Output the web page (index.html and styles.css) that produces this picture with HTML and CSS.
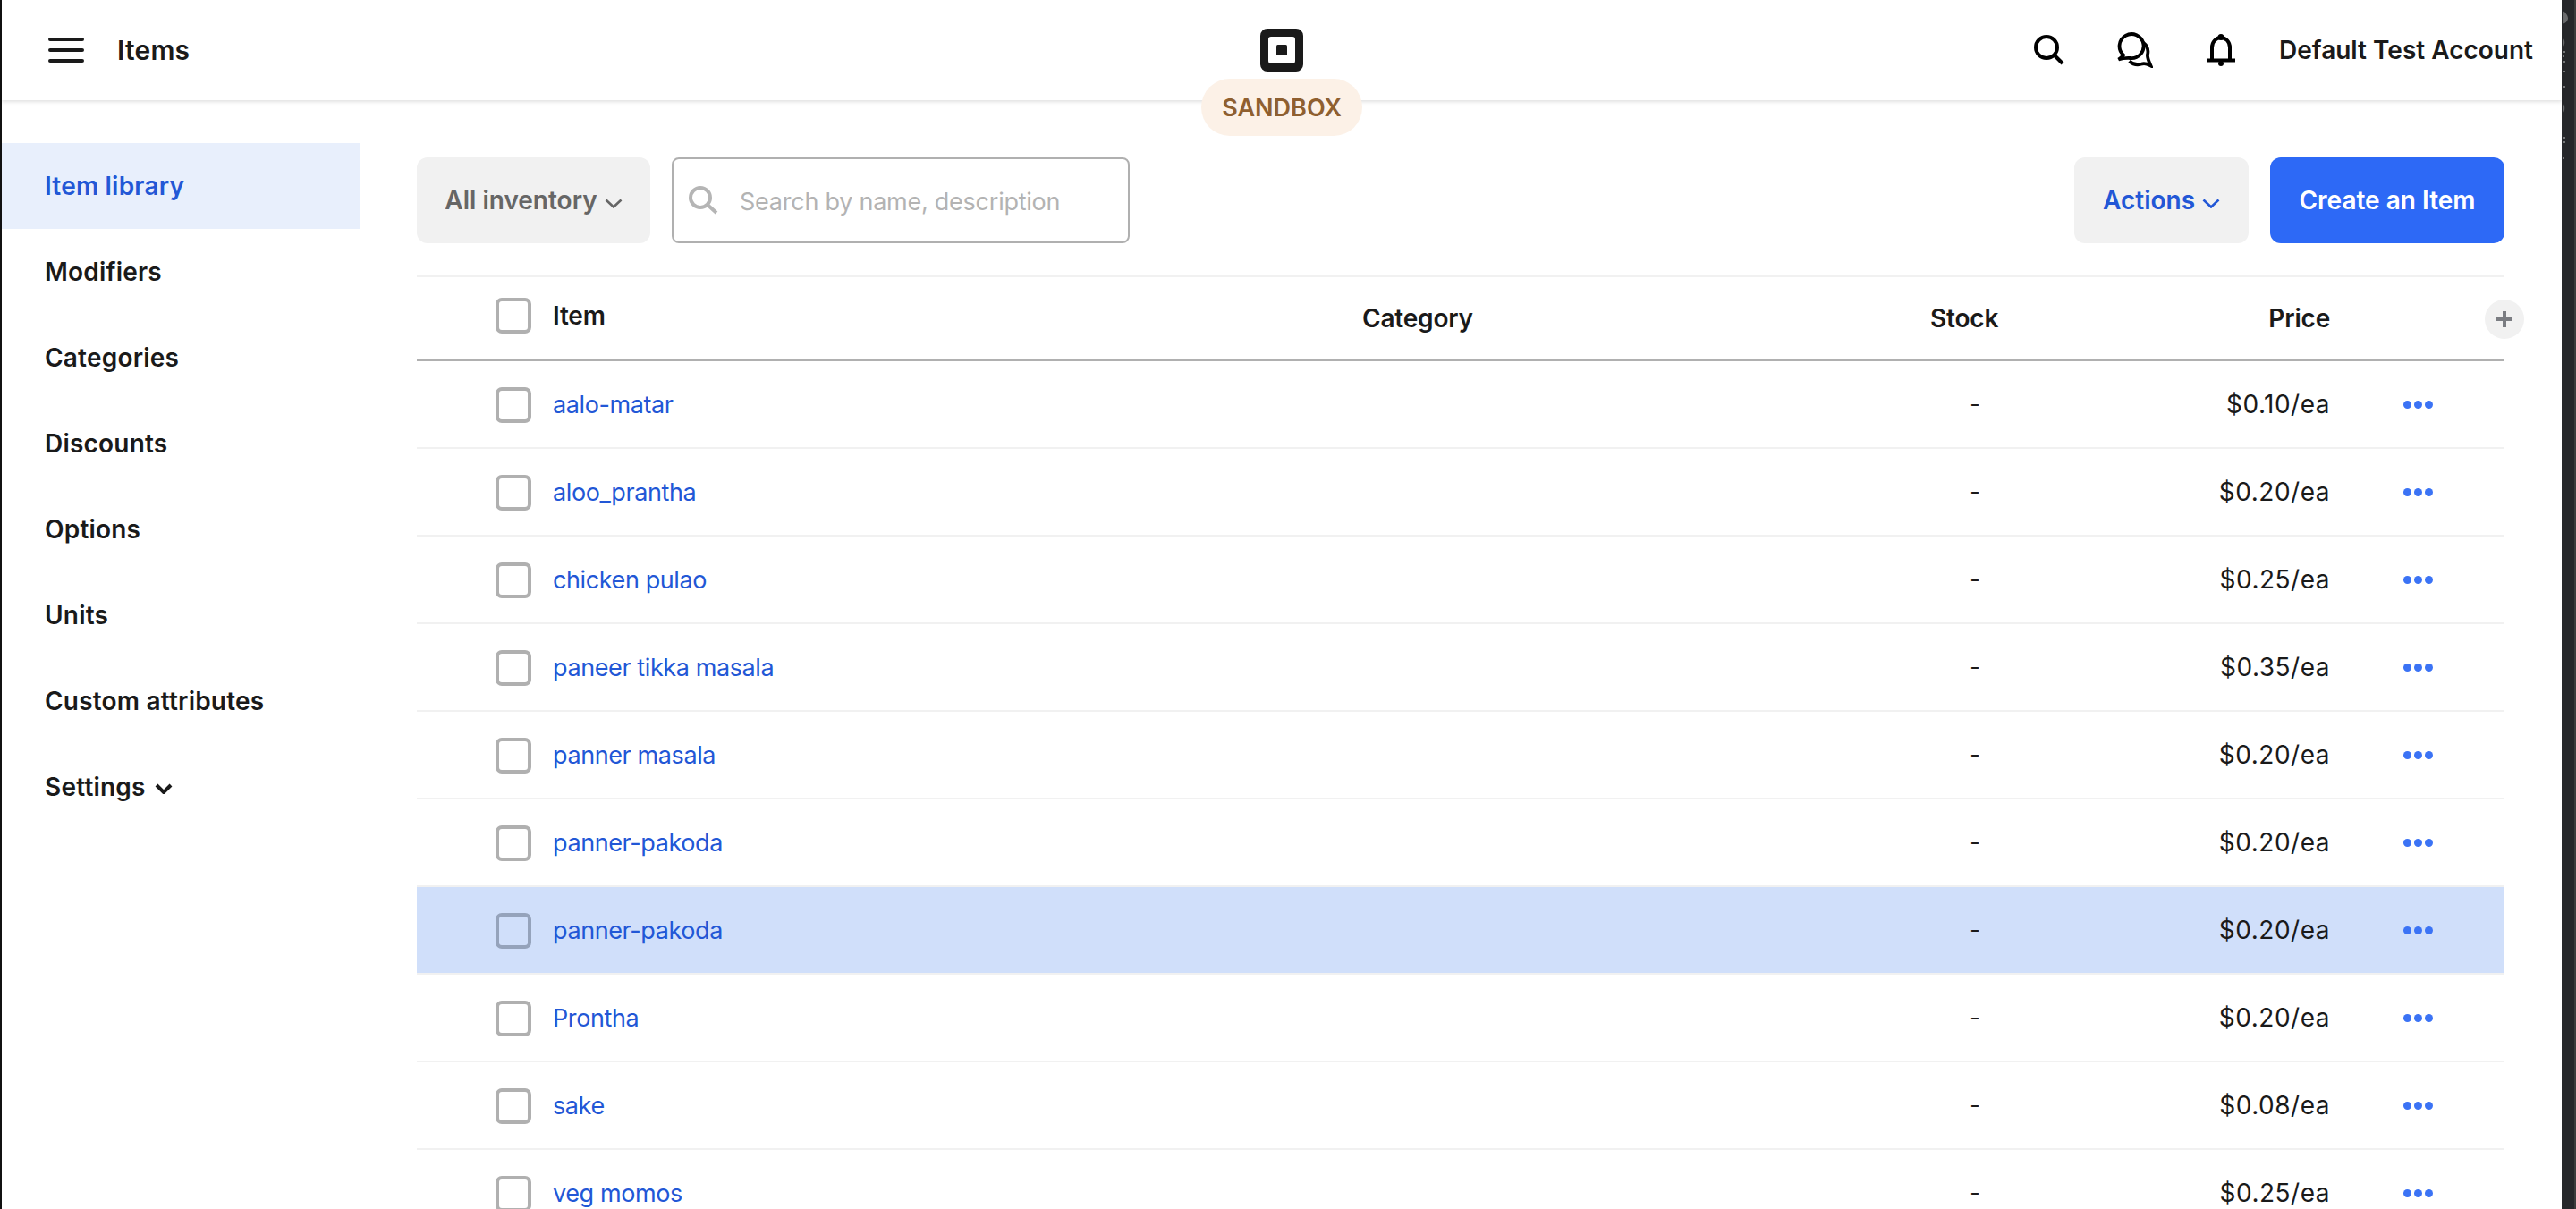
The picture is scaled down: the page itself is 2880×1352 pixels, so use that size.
FILE: index.html
```html
<!DOCTYPE html>
<html lang="en">
<head>
<meta charset="utf-8">
<title>Items</title>
<link rel="stylesheet" href="styles.css">
</head>
<body>
<div class="window">
  <div class="edge-left"></div>
  <div class="app">
    <header class="topbar">
      <div class="top-left">
        <svg class="burger" width="40" height="28" viewBox="0 0 40 28"><rect y="0" width="40" height="4" rx="2"/><rect y="12" width="40" height="4" rx="2"/><rect y="24" width="40" height="4" rx="2"/></svg>
        <span class="page-title">Items</span>
      </div>
      <svg class="logo" width="48" height="48" viewBox="0 0 48 48"><path fill-rule="evenodd" d="M8 0h32a8 8 0 0 1 8 8v32a8 8 0 0 1-8 8H8a8 8 0 0 1-8-8V8a8 8 0 0 1 8-8zM12 9a3 3 0 0 0-3 3v24a3 3 0 0 0 3 3h24a3 3 0 0 0 3-3V12a3 3 0 0 0-3-3z"/><rect x="18" y="18" width="12" height="12" rx="1.5"/></svg>
      <div class="top-right">
        <svg class="icon-search" width="34" height="34" viewBox="0 0 34 34"><circle cx="14" cy="14" r="12"/><path d="M23 23l9 9"/></svg>
        <svg class="icon-chat" width="40" height="40" viewBox="0 0 40 40"><path d="M7 25.600A13.500 13.500 0 1 1 14.500 29C10.500 28.800 6 29.200 1.500 30.500C4 28.800 5.800 27.400 7 25.600z"/><path d="M29 11.500C33.500 15 35.200 20 34 25C33.500 28 34.500 31 37.500 37.500C34 35.800 31.500 34.500 28.500 35.300C23.500 37 17.500 36 13.500 32.500"/></svg>
        <svg class="icon-bell" width="32" height="36" viewBox="0 0 32 36"><path class="bell-body" d="M6 28V15a10 11 0 0 1 20 0v13"/><rect x="0" y="27.500" width="32" height="4"/><circle cx="16" cy="3.500" r="3.500"/><circle cx="16" cy="33" r="3"/></svg>
        <span class="account">Default Test Account</span>
      </div>
      <div class="sandbox">SANDBOX</div>
    </header>
    <div class="body">
      <nav class="sidebar">
        <a class="nav-item active">Item library</a>
        <a class="nav-item">Modifiers</a>
        <a class="nav-item">Categories</a>
        <a class="nav-item">Discounts</a>
        <a class="nav-item">Options</a>
        <a class="nav-item">Units</a>
        <a class="nav-item">Custom attributes</a>
        <a class="nav-item">Settings <svg class="nav-chevron" width="20" height="12" viewBox="0 0 20 12"><path d="M2 2l8 8 8-8"/></svg></a>
      </nav>
      <main class="main">
        <div class="toolbar">
          <button class="btn btn-filter">All inventory <svg class="chevron" width="20" height="11" viewBox="0 0 20 11"><path d="M1.500 1.500L10 9.500l8.500-8"/></svg></button>
          <div class="search">
            <svg class="search-glass" width="34" height="32" viewBox="0 0 34 32"><circle cx="13" cy="13" r="11"/><path d="M21 21l10 9"/></svg>
            <span class="placeholder">Search by name, description</span>
          </div>
          <div class="spacer"></div>
          <button class="btn btn-actions">Actions <svg class="chevron" width="20" height="11" viewBox="0 0 20 11"><path d="M1.500 1.500L10 9.500l8.500-8"/></svg></button>
          <button class="btn btn-primary">Create an Item</button>
        </div>
        <div class="table">
          <div class="row head">
            <span class="check head-check"></span>
            <span class="cell-name head-name">Item</span>
            <span>Category</span>
            <span>Stock</span>
            <span class="cell-price">Price</span>
            <span></span>
            <span class="add-col"><svg width="20" height="20" viewBox="0 0 20 20"><path d="M10 1v18M1 10h18"/></svg></span>
          </div>
          <div class="row"><span class="check"></span><a class="cell-name">aalo-matar</a><span></span><span class="cell-stock">-</span><span class="cell-price">$0.10/ea</span><span class="dots"><i></i><i></i><i></i></span></div>
          <div class="row"><span class="check"></span><a class="cell-name">aloo_prantha</a><span></span><span class="cell-stock">-</span><span class="cell-price">$0.20/ea</span><span class="dots"><i></i><i></i><i></i></span></div>
          <div class="row"><span class="check"></span><a class="cell-name">chicken pulao</a><span></span><span class="cell-stock">-</span><span class="cell-price">$0.25/ea</span><span class="dots"><i></i><i></i><i></i></span></div>
          <div class="row"><span class="check"></span><a class="cell-name">paneer tikka masala</a><span></span><span class="cell-stock">-</span><span class="cell-price">$0.35/ea</span><span class="dots"><i></i><i></i><i></i></span></div>
          <div class="row"><span class="check"></span><a class="cell-name">panner masala</a><span></span><span class="cell-stock">-</span><span class="cell-price">$0.20/ea</span><span class="dots"><i></i><i></i><i></i></span></div>
          <div class="row"><span class="check"></span><a class="cell-name">panner-pakoda</a><span></span><span class="cell-stock">-</span><span class="cell-price">$0.20/ea</span><span class="dots"><i></i><i></i><i></i></span></div>
          <div class="row selected"><span class="check"></span><a class="cell-name">panner-pakoda</a><span></span><span class="cell-stock">-</span><span class="cell-price">$0.20/ea</span><span class="dots"><i></i><i></i><i></i></span></div>
          <div class="row"><span class="check"></span><a class="cell-name">Prontha</a><span></span><span class="cell-stock">-</span><span class="cell-price">$0.20/ea</span><span class="dots"><i></i><i></i><i></i></span></div>
          <div class="row"><span class="check"></span><a class="cell-name">sake</a><span></span><span class="cell-stock">-</span><span class="cell-price">$0.08/ea</span><span class="dots"><i></i><i></i><i></i></span></div>
          <div class="row"><span class="check"></span><a class="cell-name">veg momos</a><span></span><span class="cell-stock">-</span><span class="cell-price">$0.25/ea</span><span class="dots"><i></i><i></i><i></i></span></div>
        </div>
      </main>
    </div>
  </div>
  <aside class="edge-right">
    <svg width="14" height="190" viewBox="0 0 14 190"><path class="mark-soft" d="M1 12C5 14 7 18 7 21C6 25 3 26 1 27z"/><path class="mark-soft" d="M1 42C4 45 4 50 1 53z"/><path class="mark-soft" d="M1 115C4 118 4 124 1 127z"/><rect x="1" y="57" width="3" height="2"/><rect x="1" y="62" width="2" height="2"/><rect x="1" y="68" width="3" height="2"/><rect x="1" y="79" width="3" height="2"/><rect x="1" y="96" width="3" height="2"/><rect x="1" y="153" width="3" height="2"/><rect x="1" y="158" width="3" height="2"/><rect x="1" y="176" width="2" height="2"/></svg>
  </aside>
</div>
</body>
</html>
```
FILE: styles.css
```css
* { box-sizing: border-box; }
html, body { margin: 0; height: 100%; overflow: hidden; background: #fff; }
body { font-family: Inter, "Liberation Sans", sans-serif; font-size: 28px; color: #1a1a1a; }
.window { display: flex; height: 1352px; width: 2880px; overflow: hidden; }
.edge-left { width: 2px; background: #111; flex: none; }
.edge-right { width: 16px; flex: none; background: linear-gradient(90deg, #26272a 0, #26272a 14px, #3c3c3c 14px); }
.edge-right svg { display: block; fill: #77787a; }
.edge-right .mark-soft { fill: #6a6b6d; }
.app { flex: 1; min-width: 0; display: flex; flex-direction: column; }

.topbar { position: relative; height: 112px; flex: none; display: grid; grid-template-columns: 1fr auto 1fr; align-items: center; background: #fff; box-shadow: 0 2px 4px rgba(0,0,0,.12); z-index: 2; }
.top-left { display: flex; align-items: center; padding-left: 52px; gap: 37px; }
.burger { fill: #1a1a1a; display: block; }
.page-title { font-size: 30px; font-weight: 600; letter-spacing: .2px; }
.logo { display: block; fill: #1a1a1a; }
.top-right { display: flex; align-items: center; justify-content: flex-end; padding-right: 32px; }
.icon-search { margin-right: 59px; fill: none; stroke: #000; stroke-width: 4; }
.icon-chat { margin-right: 60px; fill: none; stroke: #000; stroke-width: 3.800; }
.icon-bell { margin-right: 49px; fill: #000; }
.bell-body { fill: none; stroke: #000; stroke-width: 4; }
.account { font-weight: 600; font-size: 28px; }
.sandbox { position: absolute; left: 50%; top: 88px; width: 180px; height: 64px; margin-left: -90px; border-radius: 32px; background: #fcf1e7; color: #8f5f2f; font-size: 27px; font-weight: 600; display: flex; align-items: center; justify-content: center; }

.body { flex: 1; display: flex; min-height: 0; }
.sidebar { width: 400px; flex: none; padding-top: 48px; display: flex; flex-direction: column; }
.nav-item { height: 96px; flex: none; display: flex; align-items: center; gap: 10px; padding-left: 48px; font-weight: 600; font-size: 28px; letter-spacing: .2px; color: #1a1a1a; }
.nav-item.active { background: #e8effc; color: #2257d6; }
.nav-chevron { fill: none; stroke: #1a1a1a; stroke-width: 4; margin-top: 4px; }

.main { flex: 1; min-width: 0; padding: 64px 64px 0; }
.toolbar { display: flex; align-items: stretch; height: 96px; }
.spacer { flex: 1; }
.btn { border: 0; height: 96px; border-radius: 12px; font-family: inherit; font-size: 28px; font-weight: 600; display: flex; align-items: center; justify-content: center; gap: 8px; padding: 0; }
.btn-filter { width: 261px; background: #f1f1f1; color: #666; margin-right: 24px; }
.btn-actions { width: 195px; background: #f1f1f1; color: #2257d6; margin-right: 24px; }
.btn-primary { width: 262px; background: #2d69f6; color: #fff; }
.chevron { fill: none; stroke: currentColor; stroke-width: 2.600; margin-top: 6px; }
.search { width: 512px; height: 96px; border: 2px solid #b0b0b0; border-radius: 8px; display: flex; align-items: center; padding-left: 17px; gap: 23px; }
.search-glass { fill: none; stroke: #b5b5b5; stroke-width: 4; }
.placeholder { color: #b3b3b3; font-size: 27px; letter-spacing: -.25px; margin-top: 2px; }

.table { margin-top: 36px; border-top: 2px solid #f1f1f1; }
.row { position: relative; display: grid; grid-template-columns: 40px 929px 635px 100px 347px 195px; padding-left: 88px; height: 98px; border-bottom: 2px solid #f1f1f1; align-items: center; }
.row.selected { background: #d0dffa; }
.row.selected .check { border-color: #95a3bb; }
.check { width: 40px; height: 40px; border: 4px solid #b0b0b0; border-radius: 7px; margin-top: 2px; }
.cell-name { padding-left: 24px; color: #2257d6; font-size: 27px; letter-spacing: -.4px; }
.cell-stock { text-align: center; font-size: 25px; }
.cell-price { text-align: right; letter-spacing: .5px; }
.dots { display: flex; gap: 3px; padding-left: 82px; }
.dots i { width: 9px; height: 9px; border-radius: 50%; background: #3b73f5; }
.head { height: 94px; border-bottom-color: #b0b0b0; font-weight: 600; letter-spacing: -.2px; }
.head .cell-price { letter-spacing: -.2px; }
.head-check, .head-name { margin-bottom: 6px; margin-top: 0; }
.head-name { color: #1a1a1a; font-size: 28px; letter-spacing: -.2px; }
.add-col { position: absolute; right: -22px; top: 25px; width: 44px; height: 44px; border-radius: 50%; background: #f1f1f1; display: flex; align-items: center; justify-content: center; }
.add-col svg { fill: none; stroke: #7b7d82; stroke-width: 4; }
```
